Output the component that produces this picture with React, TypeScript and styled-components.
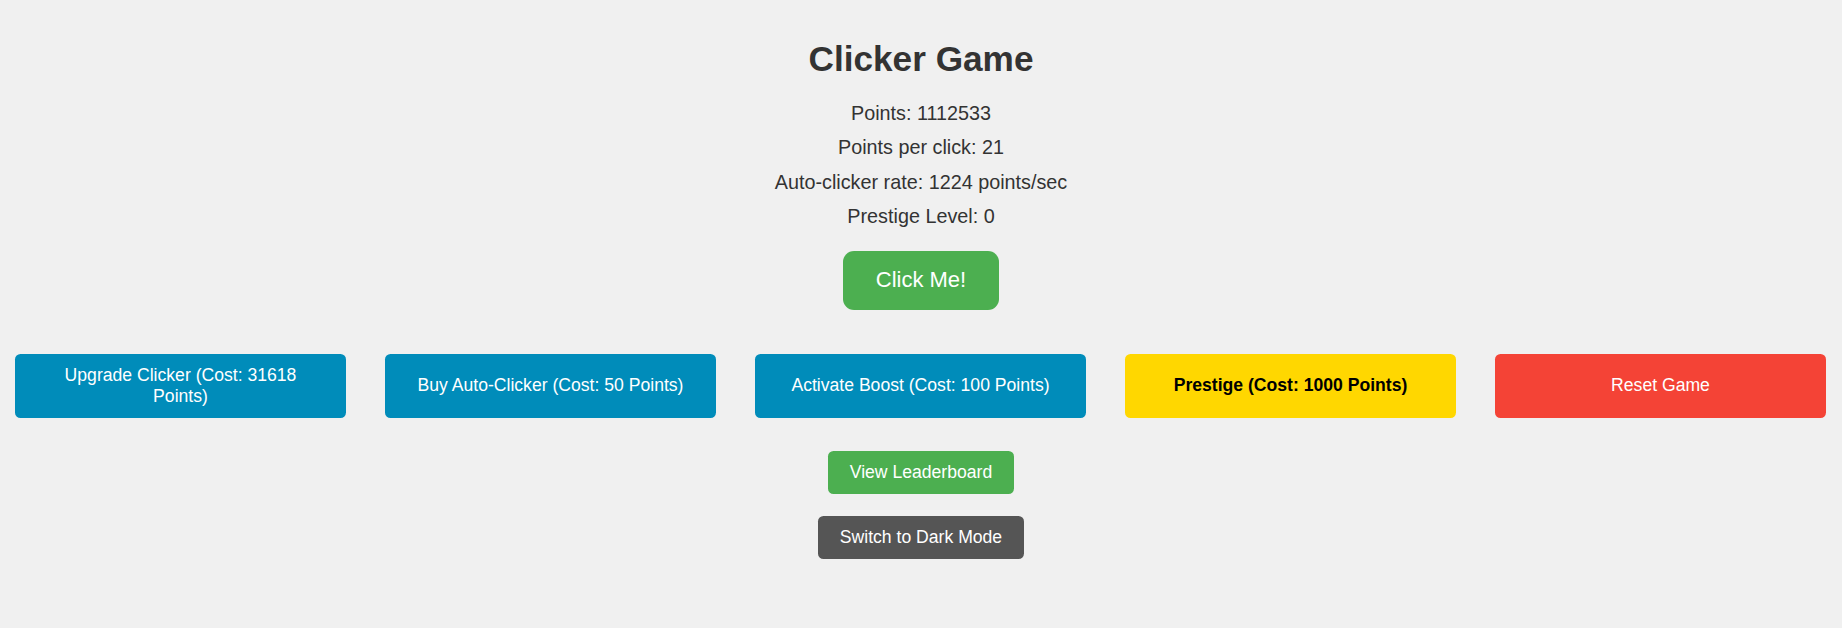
import React from "react";
import styled, { createGlobalStyle } from "styled-components";

const GlobalStyle = createGlobalStyle`
  html, body {
    margin: 0;
    padding: 0;
    background: #f0f0f0;
  }
  body {
    font-family: "Liberation Sans", Arial, sans-serif;
    color: #333333;
  }
`;

const Page = styled.div`
  display: flex;
  flex-direction: column;
  align-items: center;
  padding-top: 39px;
  min-height: 628px;
  box-sizing: border-box;
  text-align: center;
`;

const Title = styled.h1`
  margin: 0;
  font-size: 35.2px;
  line-height: 40px;
  font-weight: bold;
  color: #333333;
`;

const Stats = styled.div`
  display: flex;
  flex-direction: column;
  align-items: center;
  gap: 11.2px;
  margin-top: 23.3px;
`;

const Stat = styled.p`
  margin: 0;
  font-size: 19.8px;
  line-height: 23px;
  color: #333333;
`;

const ClickButton = styled.button`
  margin-top: 23px;
  border: none;
  border-radius: 11px;
  background: #4caf50;
  color: #ffffff;
  font-family: inherit;
  font-size: 22px;
  line-height: 26px;
  padding: 16.5px 33px;
  cursor: pointer;
`;

const ActionRow = styled.div`
  align-self: stretch;
  display: flex;
  align-items: stretch;
  gap: 39px;
  padding: 0 16px 0 15px;
  margin-top: 44px;
`;

type Tone = "blue" | "yellow" | "red" | "green" | "dark";

const toneBg: Record<Tone, string> = {
  blue: "#008cba",
  yellow: "#ffd700",
  red: "#f44336",
  green: "#4caf50",
  dark: "#555555",
};

const BaseButton = styled.button<{ $tone: Tone }>`
  border: none;
  border-radius: 5.5px;
  background: ${(p) => toneBg[p.$tone]};
  color: ${(p) => (p.$tone === "yellow" ? "#000000" : "#ffffff")};
  font-weight: ${(p) => (p.$tone === "yellow" ? "bold" : "normal")};
  font-family: inherit;
  font-size: 17.6px;
  line-height: 21px;
  padding: 11px 22px;
  cursor: pointer;
`;

const ActionButton = styled(BaseButton)`
  flex: 1 1 0;
  min-width: 0;
`;

const BottomButtons = styled.div`
  display: flex;
  flex-direction: column;
  align-items: center;
  gap: 22px;
  margin-top: 33px;
`;

export default function App() {
  return (
    <>
      <GlobalStyle />
      <Page>
        <Title>Clicker Game</Title>
        <Stats>
          <Stat>Points: 1112533</Stat>
          <Stat>Points per click: 21</Stat>
          <Stat>Auto-clicker rate: 1224 points/sec</Stat>
          <Stat>Prestige Level: 0</Stat>
        </Stats>
        <ClickButton>Click Me!</ClickButton>
        <ActionRow>
          <ActionButton $tone="blue">Upgrade Clicker (Cost: 31618 Points)</ActionButton>
          <ActionButton $tone="blue">Buy Auto-Clicker (Cost: 50 Points)</ActionButton>
          <ActionButton $tone="blue">Activate Boost (Cost: 100 Points)</ActionButton>
          <ActionButton $tone="yellow">Prestige (Cost: 1000 Points)</ActionButton>
          <ActionButton $tone="red">Reset Game</ActionButton>
        </ActionRow>
        <BottomButtons>
          <BaseButton $tone="green">View Leaderboard</BaseButton>
          <BaseButton $tone="dark">Switch to Dark Mode</BaseButton>
        </BottomButtons>
      </Page>
    </>
  );
}
